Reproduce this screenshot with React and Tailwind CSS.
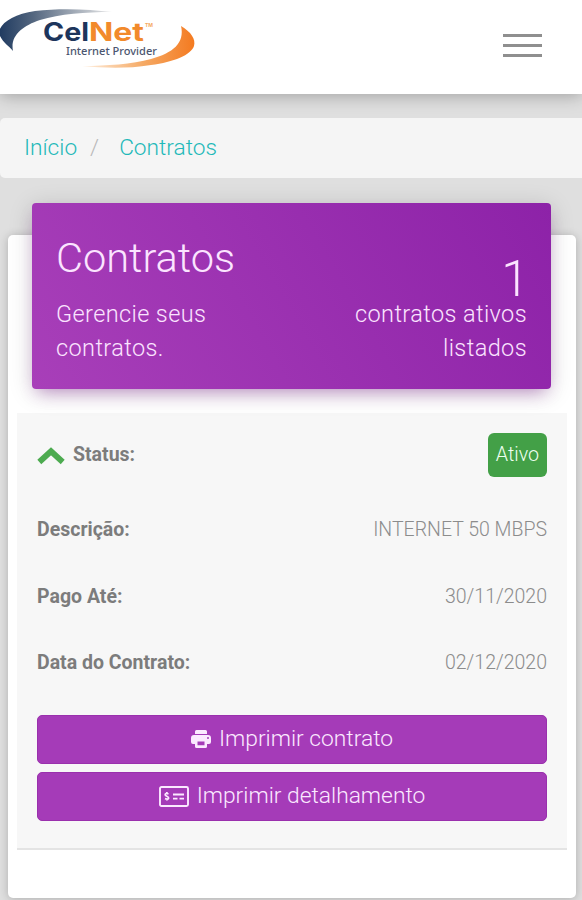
import React from "react";

function Logo() {
  return (
    <svg width="200" height="76" viewBox="0 0 200 76" role="img" aria-label="CelNet Internet Provider">
      <defs>
        <linearGradient id="navy" x1="0" y1="0" x2="1" y2="0">
          <stop offset="0" stopColor="#1f3a60" />
          <stop offset="0.3" stopColor="#53667f" />
          <stop offset="1" stopColor="#e8e8e8" />
        </linearGradient>
        <linearGradient id="amber" x1="0" y1="0" x2="1" y2="0">
          <stop offset="0" stopColor="#fff1e2" />
          <stop offset="0.55" stopColor="#f5a964" />
          <stop offset="1" stopColor="#f47a20" />
        </linearGradient>
      </defs>
      <path d="M13 51C8 45 3 43 -1 34C-2 25 12 14 35 11C60 8 88 9 112 12C85 12 60 14 40 20C22 26 10 36 13 51Z" fill="url(#navy)" />
      <path d="M181 26C191 32 196 39 194 46C191 55 174 62 151 65C126 69 104 68 82 66C107 66 132 64 151 59C173 53 185 43 181 26Z" fill="url(#amber)" />
      <g fontFamily="Inter, sans-serif" fontWeight="700" fontSize="25">
        <text x="43" y="41" textLength="46" lengthAdjust="spacingAndGlyphs" fill="#1d355c">Cel</text>
        <text x="89" y="41" textLength="55" lengthAdjust="spacingAndGlyphs" fill="#f28a2b">Net</text>
        <text x="145" y="27" fontSize="5" textLength="8" lengthAdjust="spacingAndGlyphs" fill="#f5a964">TM</text>
      </g>
      <text x="66" y="55" fontSize="11.5" fontFamily="'Noto Sans', sans-serif" fontWeight="500" textLength="91" lengthAdjust="spacingAndGlyphs" fill="#4c5670">Internet Provider</text>
    </svg>
  );
}

function PrinterIcon() {
  return (
    <svg width="20" height="18" viewBox="0 0 20 18" fill="currentColor">
      <path d="M5.5 0H14.5Q16 0 16 1.5V4H4V1.5Q4 0 5.5 0ZM3 5H17Q20 5 20 8V12Q20 14 18 14H16V16.5Q16 18 14.5 18H5.5Q4 18 4 16.5V14H2Q0 14 0 12V8Q0 5 3 5ZM6.5 11.5V15.3H13.5V11.5ZM17 7A1 1 0 1 0 17 9A1 1 0 1 0 17 7Z" fillRule="evenodd" />
    </svg>
  );
}

function MoneyCheckIcon() {
  return (
    <svg width="30" height="21" viewBox="0 0 30 21" fill="none" stroke="currentColor">
      <rect x="1" y="1" width="28" height="19" rx="1.5" strokeWidth="1.9" />
      <path d="M9.5 7.8Q6.2 6.8 6.2 8.7C6.2 10.3 9.6 10.2 9.6 12Q9.2 13.8 6 12.7M7.9 6V7.5M7.9 13V14.6" strokeWidth="1.8" />
      <path d="M14 8.5H25M14 12.7H18.5M20.5 12.7H25" strokeWidth="1.8" />
    </svg>
  );
}

function Row({ label, value }) {
  return (
    <div className="flex h-[66.5px] items-center justify-between text-[19.5px]">
      <span className="font-bold text-[#7c7c7c]">{label}</span>
      <span className="font-light text-[#8c8c8c]">{value}</span>
    </div>
  );
}

function Button({ icon, children }) {
  return (
    <button className="flex h-[49px] w-full items-center justify-center gap-2 rounded-[5px] border border-[#9a30ad] bg-[#a53bb8] text-[22.8px] font-light text-[#fbe9ff]">
      {icon}
      <span className="pt-px">{children}</span>
    </button>
  );
}

export default function App() {
  return (
    <div className="h-[900px] w-[582px] overflow-hidden bg-[#dfdfdf] font-['Roboto',sans-serif] whitespace-nowrap">
      <header className="flex h-[94px] items-start justify-between bg-white shadow-[0_2px_16px_rgba(0,0,0,0.28)]">
        <Logo />
        <div className="mt-[34px] mr-10 flex w-[39px] flex-col gap-[7px]">
          <span className="h-[3px] bg-[#8f8f8f]" />
          <span className="h-[3px] bg-[#8f8f8f]" />
          <span className="h-[3px] bg-[#8f8f8f]" />
        </div>
      </header>

      <nav className="mt-6 flex h-[60px] items-center rounded-l-[5px] bg-[#f5f5f5] pl-6 text-[22.7px] font-light text-[#1fb9b9]">
        <span>Início</span>
        <span className="ml-[13px] text-[#b9b9b9]">/</span>
        <span className="ml-5">Contratos</span>
      </nav>

      <main className="mt-[57px] ml-2 h-[663px] w-[568px] rounded-[5px] bg-white px-[9px] shadow-[0_1px_10px_rgba(0,0,0,0.22)]">
        <section className="relative -top-8 ml-[15px] flex h-[186px] w-[519px] justify-between rounded-[4px] bg-linear-[60deg,#a83fb9,#8d22a8] px-6 font-light text-[#fbe4ff] shadow-[0_4px_24px_rgba(0,0,0,0.16),0_8px_16px_-6px_rgba(156,39,176,0.45)]">
          <div className="pt-[30px]">
            <h1 className="text-[41.5px] leading-[50px]">Contratos</h1>
            <p className="mt-[14px] text-[23.5px] leading-[34px] tracking-[0.4px]">Gerencie seus<br />contratos.</p>
          </div>
          <div className="pt-[51px] text-right">
            <div className="-mr-0.5 text-[50px] leading-[50px]">1</div>
            <p className="-mt-[7px] text-[23.5px] leading-[34px] tracking-[0.4px]">contratos ativos<br />listados</p>
          </div>
        </section>

        <section className="-mt-2 h-[437px] border-b-2 border-[#e4e4e4] bg-[#f7f7f7] px-5 pt-5">
          <div className="flex h-11 items-center justify-between">
            <div className="flex items-center text-[19.5px] font-bold text-[#7c7c7c]">
              <svg width="28" height="20" viewBox="0 0 28 20" className="mr-2">
                <path d="M2.3 17L14 6.3L25.7 17" fill="none" stroke="#4dab50" strokeWidth="5.8" />
              </svg>
              <span>Status:</span>
            </div>
            <span className="flex h-11 w-[59px] items-center justify-center rounded-[6px] bg-[#43a047] text-[19.7px] font-light text-[#effff0]">Ativo</span>
          </div>
          <div className="mt-[19.5px]">
            <Row label="Descrição:" value="INTERNET 50 MBPS" />
            <Row label="Pago Até:" value="30/11/2020" />
            <Row label="Data do Contrato:" value="02/12/2020" />
          </div>
          <div className="mt-[18.5px] flex flex-col gap-2">
            <Button icon={<PrinterIcon />}>Imprimir contrato</Button>
            <Button icon={<MoneyCheckIcon />}>Imprimir detalhamento</Button>
          </div>
        </section>
      </main>
    </div>
  );
}
